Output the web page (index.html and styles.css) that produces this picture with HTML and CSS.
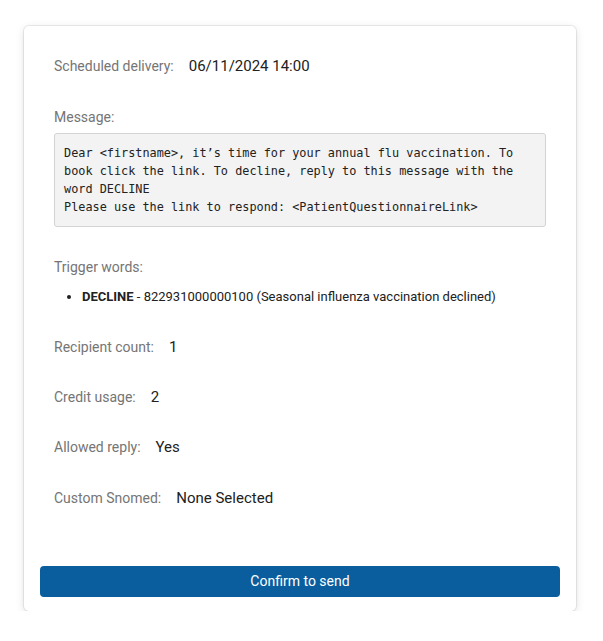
FILE: index.html
```html
<!DOCTYPE html>
<html lang="en">
<head>
    <meta charset="UTF-8">
    <meta name="viewport" content="width=device-width, initial-scale=1.0">
    <link rel="stylesheet" href="styles.css">
</head>
<body>
    <div class="card">
        <div class="details">
            <div class="row">
                <span class="label">Scheduled delivery:</span>
                <span class="value">06/11/2024 14:00</span>
            </div>

            <div class="section">
                <div class="label">Message:</div>
                <pre class="message">Dear &lt;firstname&gt;, it’s time for your annual flu vaccination. To
book click the link. To decline, reply to this message with the
word DECLINE
Please use the link to respond: &lt;PatientQuestionnaireLink&gt;</pre>
            </div>

            <div class="section">
                <div class="label">Trigger words:</div>
                <ul class="triggers">
                    <li><b>DECLINE</b> - 822931000000100 (Seasonal influenza vaccination declined)</li>
                </ul>
            </div>

            <div class="row">
                <span class="label">Recipient count:</span>
                <span class="value">1</span>
            </div>
            <div class="row">
                <span class="label">Credit usage:</span>
                <span class="value">2</span>
            </div>
            <div class="row">
                <span class="label">Allowed reply:</span>
                <span class="value">Yes</span>
            </div>
            <div class="row">
                <span class="label">Custom Snomed:</span>
                <span class="value">None Selected</span>
            </div>
        </div>

        <button type="button" class="confirm">Confirm to send</button>
    </div>
</body>
</html>
```

FILE: styles.css
```css
body {
    margin: 0;
    background: #ffffff;
    font-family: Roboto, 'Liberation Sans', sans-serif;
}

.card {
    width: 552px;
    box-sizing: border-box;
    margin: 26px 0 0 24px;
    padding: 0 16px 14px;
    background: #fff;
    border-radius: 5px;
    box-shadow: 0 0 0 1px rgba(0, 0, 0, 0.07), 0 2px 8px rgba(0, 0, 0, 0.13);
}

.details {
    padding: 28px 14px 56px;
    display: flex;
    flex-direction: column;
    gap: 26.25px;
}

.section {
    margin-top: 1px;
}

.row {
    display: flex;
    align-items: baseline;
    gap: 15px;
    line-height: 24px;
}

.label {
    font-size: 14px;
    color: #757575;
    line-height: 24px;
}

.value {
    font-size: 15px;
    color: #212121;
}

.message {
    margin: 4px 0 0;
    padding: 10px 9px;
    background: #f3f3f3;
    border: 1px solid #d4d4d4;
    border-radius: 3px;
    font-family: 'DejaVu Sans Mono', 'Liberation Mono', monospace;
    font-size: 11.85px;
    line-height: 18px;
    color: #222;
    white-space: pre-wrap;
}

.triggers {
    margin: 6px 0 0;
    padding-left: 28px;
    font-size: 13px;
    line-height: 24px;
    color: #212121;
}

.triggers b {
    font-weight: 700;
}

.confirm {
    display: block;
    width: 100%;
    height: 31px;
    border: none;
    border-radius: 4px;
    background: #0a5e9e;
    color: #fff;
    font-family: Roboto, 'Liberation Sans', sans-serif;
    font-size: 14px;
    font-weight: 400;
    cursor: pointer;
}
```
